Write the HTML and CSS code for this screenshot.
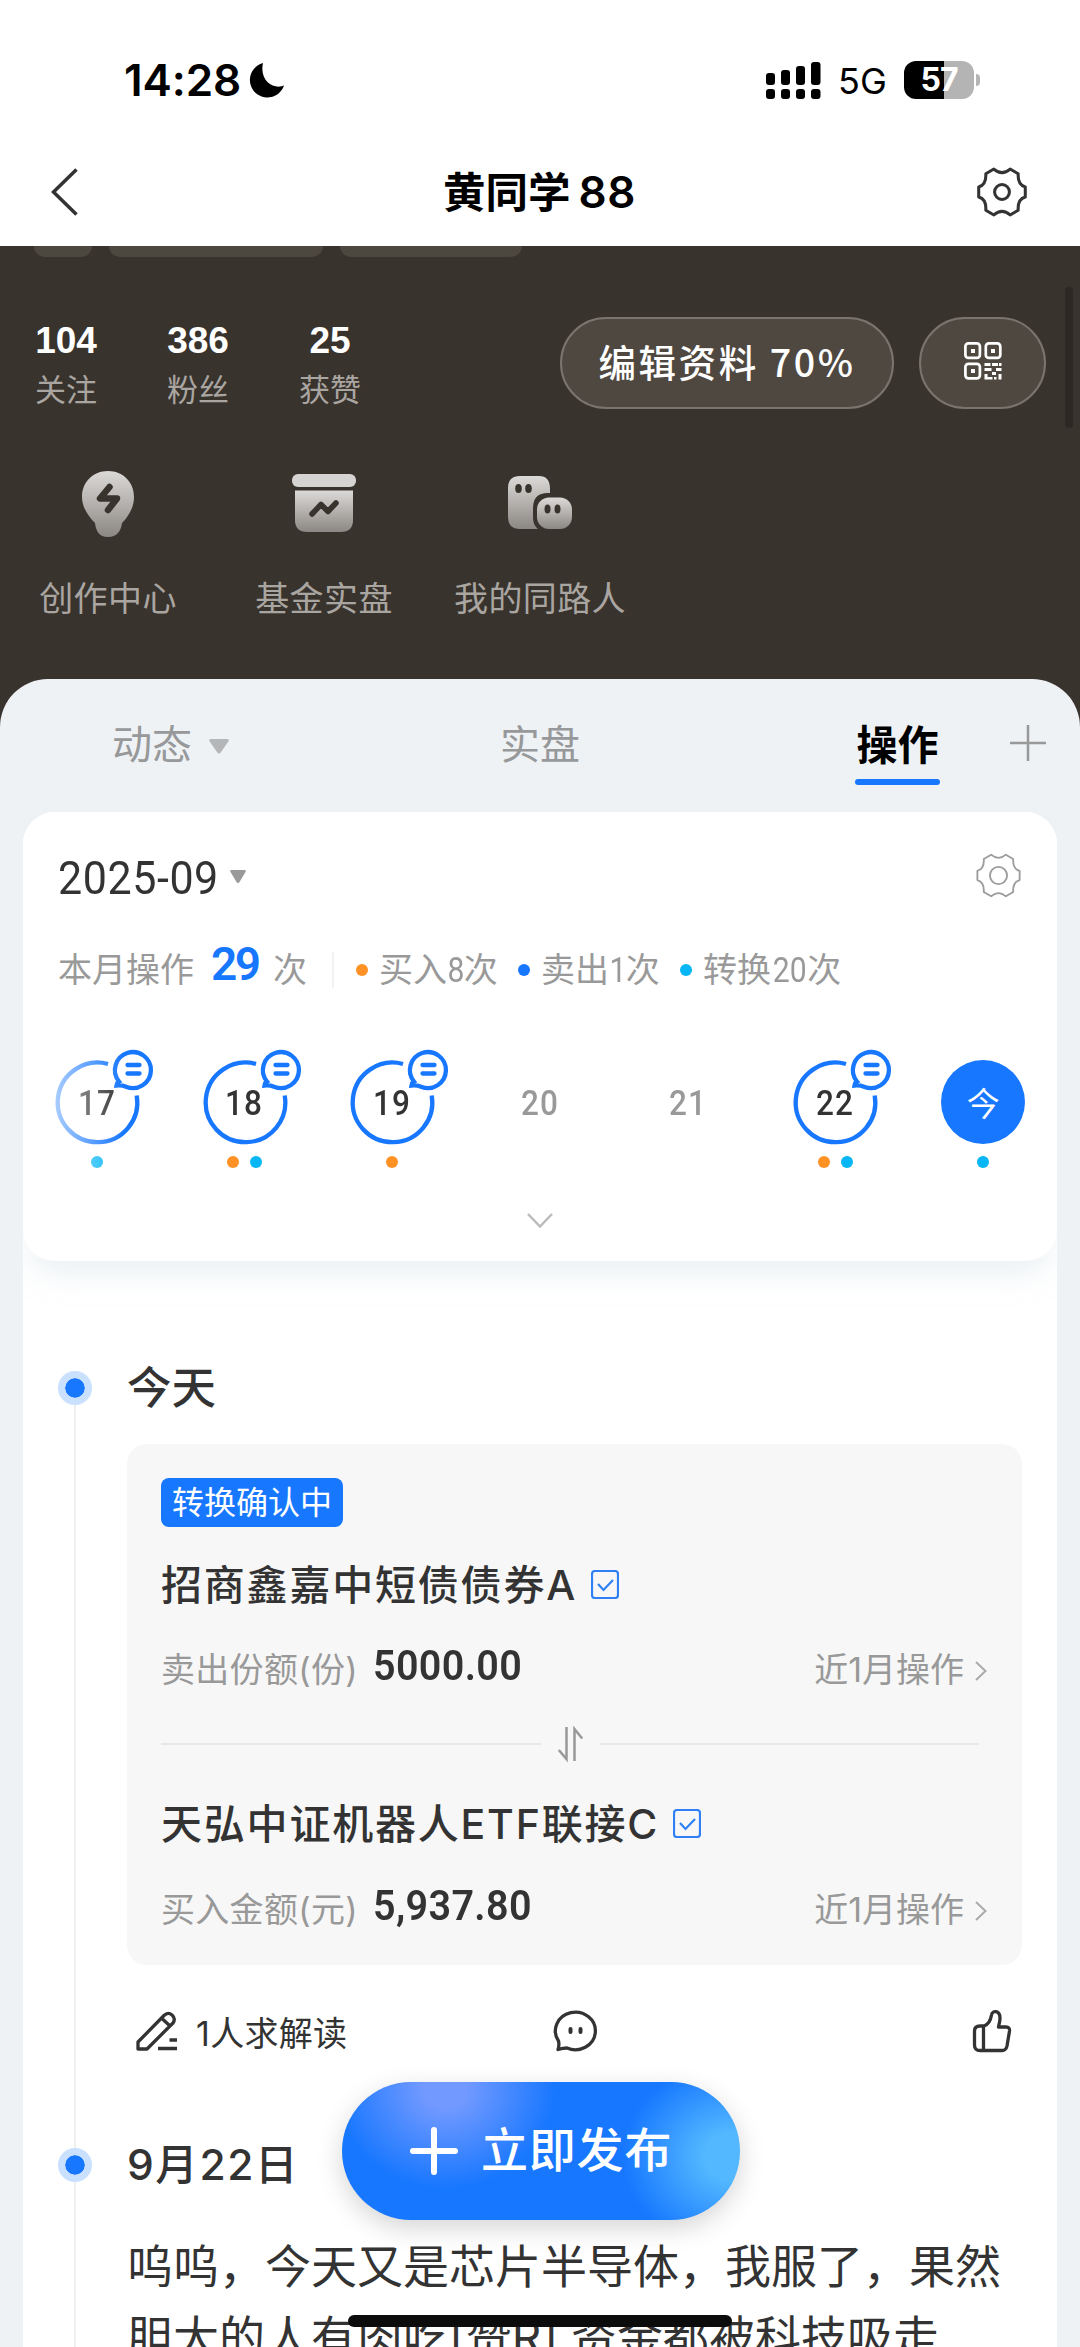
FILE: index.html
```html
<!DOCTYPE html>
<html lang="zh-CN">
<head>
<meta charset="utf-8">
<title>黄同学88</title>
<link rel="stylesheet" href="styles.css">
</head>
<body>
<svg class="defs" width="0" height="0" aria-hidden="true">
  <defs>
    <linearGradient id="silver" x1="0" y1="0" x2="0" y2="1">
      <stop offset="0" stop-color="#dcdad8"/><stop offset="1" stop-color="#8b8783"/>
    </linearGradient>
    <symbol id="gear" viewBox="44 47 160 160">
      <path d="M100 59Q124 80 148 59L172 73Q170 106 193 112V142Q170 148 172 181L148 195Q124 174 100 195L76 181Q78 148 55 142V112Q78 106 76 73Z"/>
      <circle cx="124" cy="127" r="22"/>
    </symbol>
    <symbol id="gear-light" viewBox="44 47 160 160">
      <path d="M100 59Q124 80 148 59L172 73Q170 106 193 112V142Q170 148 172 181L148 195Q124 174 100 195L76 181Q78 148 55 142V112Q78 106 76 73Z"/>
      <circle cx="124" cy="127" r="28"/>
    </symbol>
    <symbol id="ring" viewBox="0 0 84 84" overflow="visible">
      <path d="M53 4A39.8 39.8 0 1 0 81.7 35.5"/>
      <path d="M64 21.5A18 18 0 1 1 71 26.7Q67 25 61.5 25.5Q62 22.500 64 21.500Z"/>
      <path d="M72.500 5h12M72.500 13.500h12" stroke-linecap="round"/>
    </symbol>
    <symbol id="check" viewBox="0 0 28 29">
      <rect x="1" y="1" width="26" height="27" rx="3"/>
      <path d="M7 14l5.500 6L22 10"/>
    </symbol>
    <symbol id="next" viewBox="0 0 12 20"><path d="M1 1l9.500 9L1 19"/></symbol>
  </defs>
</svg>

<header class="top">
  <div class="status">
    <span class="status-time">14:28</span>
    <svg class="moon" viewBox="0 0 34 34"><path d="M13 0A17.500 17.500 0 1 0 34 22.500C24 27 9 18 13 0Z"/></svg>
    <svg class="signal" viewBox="0 0 55 37">
      <rect x="0" y="11" width="9" height="12" rx="3"/><rect x="15" y="8" width="9" height="15" rx="3"/><rect x="30" y="4" width="9" height="19" rx="3"/><rect x="45" y="0" width="9.500" height="23" rx="3"/>
      <rect x="0" y="27" width="9" height="10" rx="3"/><rect x="15" y="27" width="9" height="10" rx="3"/><rect x="30" y="27" width="9" height="10" rx="3"/><rect x="45" y="27" width="9.500" height="10" rx="3"/>
    </svg>
    <span class="status-net">5G</span>
    <span class="battery">57</span>
    <span class="battery-tip"></span>
  </div>
  <nav class="nav">
    <svg class="back" viewBox="0 0 28 48"><path d="M25.500 1.500L2.500 24l23 22.500"/></svg>
    <h1>黄同学<span class="num">88</span></h1>
    <svg class="gear"><use href="#gear"/></svg>
  </nav>
</header>

<main>
  <section class="hero">
    <div class="chips"><i class="chip chip-a"></i><i class="chip chip-b"></i><i class="chip chip-c"></i></div>
    <div class="profile">
      <div class="counts">
        <div class="count"><b>104</b><span>关注</span></div>
        <div class="count"><b>386</b><span>粉丝</span></div>
        <div class="count"><b>25</b><span>获赞</span></div>
      </div>
      <div class="pill pill-edit">编辑资料 70%</div>
      <div class="pill pill-qr">
        <svg viewBox="0 0 38 38">
          <g fill="none" stroke="#fff" stroke-width="2.700"><rect x="1.400" y="1.400" width="14.500" height="14.500" rx="3"/><rect x="21.800" y="1.400" width="14.500" height="14.500" rx="3"/><rect x="1.400" y="21.800" width="14.500" height="14.500" rx="3"/></g>
          <path fill="#fff" d="M7 7h4v4H7zM27 7h4v4h-4zM7 27h4v4H7zM20.500 21h6v3h-6zM28 21h6v3h-6zM35 21h2.500v3H35zM20.500 26h7v3h-7zM32 26h5.500v3H32zM28 30h4v3h-4zM20.500 32h3v3h5v2.500h-8zM34.500 32h3v5.500h-3zM30 35h2.500v2.500H30z"/>
        </svg>
      </div>
    </div>
    <div class="shortcuts">
      <div class="shortcut">
        <svg width="54" height="66" viewBox="0 0 54 66"><path fill="url(#silver)" d="M27 0C42 0 53 11 53 26C53 37 47 46 41 52C40 60 36 66 27 66S15 60 14 52C8 46 1 37 1 26C1 11 12 0 27 0Z"/><path class="ink" d="M28.500 16L19 27.500H36L27 39" stroke-width="6.500"/></svg>
        <span>创作中心</span>
      </div>
      <div class="shortcut">
        <svg width="64" height="66" viewBox="0 0 64 66"><rect x="0" y="3" width="64" height="13" rx="6" fill="#d6d4d2"/><path fill="url(#silver)" d="M3 19.500H61V49Q61 61 49 61H15Q3 61 3 49Z"/><path class="ink" d="M20 43l9-9.500 7 7L44 32" stroke-width="5.500"/></svg>
        <span>基金实盘</span>
      </div>
      <div class="shortcut">
        <svg width="64" height="66" viewBox="0 0 64 66"><path fill="url(#silver)" d="M12 5H31Q42 5 42 18V22H40Q25 22 25 37V47Q25 54 30 58H12Q0 58 0 46V17Q0 5 12 5Z"/><rect x="29" y="26.500" width="35" height="31.500" rx="12" fill="url(#silver)"/><g fill="#39332d"><ellipse cx="10.500" cy="17.500" rx="3.300" ry="4.500"/><ellipse cx="20.500" cy="17.500" rx="3.300" ry="4.500"/><ellipse cx="39.500" cy="38" rx="3" ry="4.500"/><ellipse cx="49.500" cy="38" rx="3" ry="4.500"/></g></svg>
        <span>我的同路人</span>
      </div>
    </div>
  </section>

  <section class="panel">
    <div class="tabs">
      <div class="tab">动态<svg width="20" height="15" viewBox="0 0 20 15"><path fill="#b4b6b8" d="M2 0H18Q21 0 19 3L12 13Q10 16 8 13L1 3Q-1 0 2 0Z"/></svg></div>
      <div class="tab tab-mid">实盘</div>
      <div class="tab-end">
        <div class="tab tab-active">操作</div>
        <svg class="plus" viewBox="0 0 36 36"><path d="M18 0V36M0 18H36"/></svg>
      </div>
    </div>

    <div class="feed">
      <section class="calendar">
        <div class="month">
          <span class="din month-text">2025-09</span>
          <svg width="16" height="13" viewBox="0 0 16 13"><path fill="#999" d="M1.500 0H14.500Q16.500 0 15.500 2L9.500 12Q8 14 6.500 12L.5 2Q-.5 0 1.500 0Z"/></svg>
          <svg class="gear gear-thin"><use href="#gear-light"/></svg>
        </div>
        <div class="summary">
          <span>本月操作</span><b class="din">29</b><span>次</span>
          <i class="divider"></i>
          <i class="dot orange"></i><span class="kind">买入<em class="din">8</em>次</span>
          <i class="dot blue"></i><span class="kind">卖出<em class="din">1</em>次</span>
          <i class="dot cyan"></i><span class="kind">转换<em class="din">20</em>次</span>
        </div>
        <div class="days">
          <div class="day day-faded"><div class="face"><svg><use href="#ring"/></svg><span class="din">17</span></div><div class="dots"><i class="dot cyan"></i></div></div>
          <div class="day"><div class="face"><svg><use href="#ring"/></svg><span class="din">18</span></div><div class="dots"><i class="dot orange"></i><i class="dot cyan"></i></div></div>
          <div class="day"><div class="face"><svg><use href="#ring"/></svg><span class="din">19</span></div><div class="dots"><i class="dot orange"></i></div></div>
          <div class="day day-off"><div class="face"><span class="din">20</span></div></div>
          <div class="day day-off"><div class="face"><span class="din">21</span></div></div>
          <div class="day"><div class="face"><svg><use href="#ring"/></svg><span class="din">22</span></div><div class="dots"><i class="dot orange"></i><i class="dot cyan"></i></div></div>
          <div class="day"><div class="face face-today"><span>今</span></div><div class="dots"><i class="dot cyan"></i></div></div>
        </div>
        <svg class="expand" viewBox="0 0 26 15"><path d="M1 1l12 12.500L25 1"/></svg>
      </section>

      <article class="entry">
        <div class="rail"><i class="node"></i><i class="line"></i></div>
        <div class="entry-body">
          <h2>今天</h2>
          <div class="trade">
            <span class="tag">转换确认中</span>
            <div class="fund"><span>招商鑫嘉中短债债券A</span><svg><use href="#check"/></svg></div>
            <div class="amount"><span class="label">卖出份额(份)</span><b class="din">5000.00</b><span class="recent">近1月操作</span><svg><use href="#next"/></svg></div>
            <div class="swap"><i></i><svg viewBox="0 0 25 34"><path d="M8.500 0V32L.8 23M16.500 34V2L24.200 11.500"/></svg><i></i></div>
            <div class="fund"><span>天弘中证机器人ETF联接C</span><svg><use href="#check"/></svg></div>
            <div class="amount amount-last"><span class="label">买入金额(元)</span><b class="din">5,937.80</b><span class="recent">近1月操作</span><svg><use href="#next"/></svg></div>
          </div>
          <div class="actions">
            <svg width="42" height="40" viewBox="0 0 42 40"><path d="M2 38V31L28 4.500Q32 .5 36 4T37 12L11 38ZM26 7.500l8 7.500M22 37.500H41M33.500 29H41"/></svg>
            <span>1人求解读</span>
            <svg class="comment" width="44" height="42" viewBox="0 0 44 42"><path d="M5.500 31A20 18.800 0 1 1 14 38Q10 38 5 39.500Q6.500 35 5.500 31Z"/><path d="M17.500 19v3M27.500 19v3" stroke-width="4" stroke-linecap="round"/></svg>
            <svg class="like" width="38" height="42" viewBox="0 0 38 42"><path d="M11 16C17 14 18 8 18.500 5C19 0 27 0 27 8C27 12 26 14 25.500 17H33Q37 17 36.500 21L34 36Q33 40.500 29 40.500H7Q1.500 40.500 1.500 35V21Q1.500 16 7 16ZM10.500 16V40"/></svg>
          </div>
        </div>
      </article>

      <article class="entry">
        <div class="rail"><i class="node"></i><i class="line"></i></div>
        <div class="entry-body">
          <h2 class="date">9月22日</h2>
          <p>呜呜，今天又是芯片半导体，我服了，果然<br>胆大的人有肉吃[赞R] 资金都被科技吸走</p>
        </div>
      </article>
    </div>
  </section>
</main>

<div class="scrollbar"></div>
<div class="publish"><svg viewBox="0 0 46 46"><path d="M23 2V44M2 23H44"/></svg><span>立即发布</span></div>
<div class="home-bar"></div>
</body>
</html>
```

FILE: styles.css
```css
* { box-sizing: border-box; }
body {
  margin: 0;
  position: relative;
  width: 1080px;
  height: 2347px;
  overflow: hidden;
  background: #fff;
  color: #333;
  font-family: Inter, "Noto Sans CJK SC", sans-serif;
  font-weight: 400;
}
h1, h2, p { margin: 0; }
i, em { font-style: normal; }
svg { display: block; flex: none; fill: none; overflow: visible; }
.defs { position: absolute; }
.din { font-family: Roboto, "Noto Sans CJK SC", sans-serif; }

/* status bar and navigation */
.top { height: 246px; background: #fff; }
.status { height: 160px; padding-left: 124px; display: flex; align-items: center; color: #000; }
.status-time { width: 126px; font-size: 44px; font-weight: 600; letter-spacing: -.1px; white-space: nowrap; }
.moon { width: 34px; height: 34px; fill: #000; }
.signal { width: 55px; height: 37px; margin-left: 482px; fill: #000; }
.status-net { margin-left: 17px; width: 66px; font-size: 36px; line-height: 40px; padding-top: 2px; }
.battery {
  width: 70px; height: 38px; border-radius: 12px;
  background: linear-gradient(to right, #000 57%, #b4b4b4 57%);
  color: #fff; font-size: 32px; font-weight: 700; line-height: 38px; text-align: center;
  letter-spacing: -1px;
}
.battery-tip { width: 4px; height: 12px; margin-left: 2px; border-radius: 0 4px 4px 0; background: #b4b4b4; }
.nav { height: 64px; padding: 0 52px 0 51px; display: flex; align-items: center; justify-content: space-between; }
.nav h1 { color: #000; font-size: 42.500px; font-weight: 700; line-height: 64px; margin-right: -25px; }
.nav .num { margin-left: 8px; font-size: 44px; font-weight: 600; letter-spacing: .5px; }
.back { width: 28px; height: 48px; stroke: #333; stroke-width: 3.500; }
.gear { width: 54px; height: 54px; margin-right: -1px; stroke: #333; stroke-width: 9; stroke-linejoin: round; }
.gear-thin { width: 49px; height: 49px; margin-right: 1px; margin-top: -5px; stroke: #9a9c9e; stroke-width: 6; margin-left: auto; }

/* dark profile area */
main { background: #39332d; }
.hero { height: 433px; }
.chips { height: 11px; padding-left: 34px; display: flex; }
.chip { height: 11px; background: #4d483f; border-radius: 0 0 12px 12px; }
.chip-a { width: 58px; }
.chip-b { width: 214px; margin-left: 17px; }
.chip-c { width: 182px; margin-left: 17px; }
.profile { height: 98px; margin-top: 60px; padding: 0 34px 0 33px; display: flex; }
.counts { display: flex; gap: 66px; margin-right: auto; }
.count { width: 66px; display: flex; flex-direction: column; align-items: center; }
.count b { color: #fff; font: 700 37px/48px "Liberation Sans", sans-serif; }
.count span { color: #a9a5a1; font-size: 31px; line-height: 50px; }
.pill {
  height: 92px; border: 2px solid #7a746e; border-radius: 46px; background: #4f4841; color: #fff;
  display: flex; align-items: center; justify-content: center;
}
.pill-edit { width: 334px; font-family: "Noto Sans CJK SC", sans-serif; font-size: 37.500px; font-weight: 500; letter-spacing: 2.600px; line-height: 84px; padding-bottom: 4px; white-space: nowrap; }
.pill-qr { width: 127px; margin-left: 25px; }
.pill-qr svg { width: 38px; height: 38px; margin-bottom: 5px; }
.shortcuts { margin-top: 56px; display: grid; grid-template-columns: repeat(3, 216px); }
.shortcut { display: flex; flex-direction: column; align-items: center; }
.shortcut span { margin-top: 37px; color: #a9a5a1; font-size: 34px; line-height: 50px; letter-spacing: .4px; }
.ink { stroke: #39332d; stroke-linecap: round; stroke-linejoin: round; }

/* tab strip */
.panel { height: 1668px; border-radius: 48px 48px 0 0; background: #eef2f5; }
.tabs { height: 133px; padding: 40px 34px 0 112px; display: grid; grid-template-columns: 275px 306px 1fr; }
.tab { color: #979899; font-size: 40px; line-height: 52px; display: flex; align-items: center; height: 52px; }
.tab svg { margin-left: 17px; margin-top: 2px; }
.tab-mid { justify-content: center; }
.tab-end { display: flex; justify-content: flex-end; }
.tab-active { display: block; width: 85px; height: 60px; color: #000; font-weight: 700; font-size: 41px; text-align: center; white-space: nowrap; }
.tab-active::after { content: ""; display: block; height: 6px; margin-top: 8px; border-radius: 3px; background: #1777ff; }
.plus { width: 36px; height: 36px; margin: 6px 0 0 70px; stroke: #999; stroke-width: 2.500; }

/* monthly calendar card */
.feed { height: 1535px; margin: 0 23px; border-radius: 32px 32px 0 0; background: #fff; }
.calendar { height: 449px; padding-top: 36px; border-radius: 32px; background: #fff; box-shadow: 0 22px 26px -8px rgba(220, 230, 236, .5); clip-path: inset(0 0 -60px 0); }
.month { height: 60px; padding: 0 33px 0 35px; display: flex; align-items: center; }
.month-text { width: 172px; font-size: 46px; letter-spacing: .6px; transform: scaleX(.935); transform-origin: left; white-space: nowrap; line-height: 60px; }
.month > svg:nth-child(2) { margin-top: -4px; }
.summary { height: 60px; margin-top: 32px; padding-left: 35px; display: flex; align-items: center; color: #999; font-size: 34px; line-height: 60px; white-space: nowrap; }
.summary b { width: 63px; padding: 0 0 12px 17px; color: #1777ff; font-size: 46px; font-weight: 600; letter-spacing: -2.500px; margin-right: 16px; }
.summary em { display: inline-block; font-size: 35px; transform: scaleX(.86); margin: 0 -1.500px; }
.divider { width: 2px; height: 36px; margin: 0 22px 0 25px; background: #f2f2f2; }
.dot { flex: none; width: 12px; height: 12px; border-radius: 50%; }
.orange { background: #ff9125; }
.blue { background: #1777ff; }
.cyan { background: #06b6f5; }
.kind { width: 119px; margin: 0 20px 0 11px; }
.days { margin-top: 60px; display: grid; grid-template-columns: repeat(7, 1fr); height: 108px; }
.day { display: flex; flex-direction: column; align-items: center; }
.day-faded { margin-top: -20px; padding-top: 20px; mask-image: linear-gradient(to right, rgba(0,0,0,.35) 20%, #000 68%); }
.face { width: 84px; height: 84px; display: grid; place-items: center; }
.face > * { grid-area: 1 / 1; }
.face svg { width: 84px; height: 84px; stroke: #1777ff; stroke-width: 4.300; }
.face span { font-size: 35px; font-weight: 500; letter-spacing: 1.200px; padding-top: 2px; transform: scaleX(.9); }
.day-off .face span { color: #999; }
.face-today { border-radius: 50%; background: #1777ff; color: #fff; }
.face-today span { font-size: 33px; font-weight: 400; letter-spacing: 0; padding: 0; transform: none; }
.dots { display: flex; gap: 11px; margin-top: 12px; }
.expand { width: 26px; height: 15px; margin: 45px auto 0; stroke: #bbb; stroke-width: 2.500; }

/* timeline */
.entry { display: flex; }
.calendar + .entry { padding-top: 97px; height: 874px; }
.rail { width: 104px; padding-top: 13px; display: flex; flex-direction: column; align-items: center; }
.node { flex: none; width: 34px; height: 34px; border: 7px solid #c9e0ff; border-radius: 50%; background: #1777ff; background-clip: padding-box; }
.line { flex: 1; width: 2px; min-height: 160px; margin-bottom: -13px; background: #efefef; }
.entry-body { flex: 1; }
.entry h2 { font-size: 44.500px; line-height: 60px; font-weight: 500; }
.entry .date { font-size: 42.500px; letter-spacing: 1.600px; }
.trade { width: 895px; height: 521px; margin-top: 26px; padding: 34px 35px 0 34px; border-radius: 20px; background: #f7f7f7; }
.tag { display: block; width: 182px; height: 49px; border-radius: 8px; background: #1777ff; color: #fff; font-size: 32px; line-height: 49px; text-align: center; white-space: nowrap; }
.fund { height: 50px; margin-top: 32px; display: flex; align-items: center; gap: 14px; font-size: 41px; font-weight: 500; white-space: nowrap; letter-spacing: 1.800px; }
.fund span { padding-bottom: 5px; }
.fund svg { width: 28px; height: 29px; stroke: #2f80f5; stroke-width: 2.200; }
.amount { height: 50px; margin-top: 35px; display: flex; align-items: center; font-size: 34px; color: #999; white-space: nowrap; }
.amount span { padding-bottom: 3px; }
.amount .label { width: 195px; letter-spacing: .3px; }
.amount b { margin-left: 17px; padding-bottom: 8px; color: #333; font-size: 42px; font-weight: 600; letter-spacing: .4px; transform: scaleX(.94); transform-origin: left; }
.recent { margin-left: auto; }
.amount svg { width: 12px; height: 20px; margin-left: 11px; margin-top: 4px; stroke: #aaa; stroke-width: 2; }
.swap { height: 34px; margin: 33px 8px 37px 0; display: flex; align-items: center; }
.swap i { flex: 1; height: 2px; background: #e8e8e8; }
.swap svg { width: 25px; height: 34px; margin: 0 17px; stroke: #999; stroke-width: 2.500; }
.swap + .fund { margin-top: 0; }
.amount-last { margin-top: 36px; }
.actions { width: 895px; height: 60px; margin-top: 36px; padding: 0 11px 0 9px; display: flex; align-items: center; font-size: 34px; white-space: nowrap; }
.actions svg { stroke: #333; stroke-width: 3.300; stroke-linejoin: round; }
.actions span { width: 156px; margin-left: 18px; letter-spacing: .3px; }
.comment { margin-left: 201px; }
.like { margin-left: auto; }
.entry p { margin-top: 36px; font-size: 46px; line-height: 71px; white-space: nowrap; }

/* floating layers */
.scrollbar { position: absolute; left: 1065px; top: 287px; width: 8px; height: 141px; border-radius: 4px; background: #2d2824; }
.publish {
  position: absolute; left: 342px; top: 2082px; width: 398px; height: 138px; border-radius: 69px;
  background:
    radial-gradient(ellipse 110px 95px at 98% 54%, #53b8ff 25%, rgba(83,184,255,0) 100%),
    radial-gradient(ellipse 110px 100px at 26% 5%, #7199ff 20%, rgba(113,153,255,0) 100%),
    #1777ff;
  box-shadow: 0 8px 26px rgba(0, 0, 0, .17);
  display: flex; align-items: center; padding-left: 69px; color: #fff; font-size: 47px; font-weight: 500;
}
.publish svg { width: 46px; height: 46px; margin-right: 24px; stroke: #fff; stroke-width: 6; stroke-linecap: round; }
.publish span { white-space: nowrap; letter-spacing: .8px; line-height: 60px; margin-top: -3px; }
.home-bar { position: absolute; left: 348px; top: 2315px; width: 384px; height: 12px; border-radius: 6px; background: #0c0c0c; }
```
